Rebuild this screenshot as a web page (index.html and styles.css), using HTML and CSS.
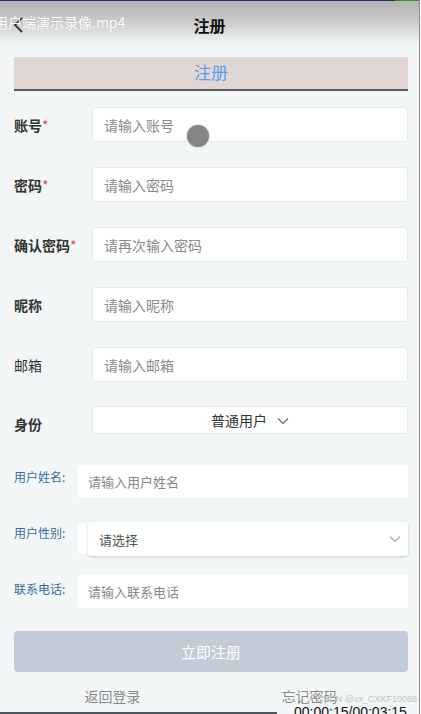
FILE: index.html
```html
<!DOCTYPE html>
<html lang="zh">
<head>
<meta charset="utf-8">
<link rel="stylesheet" href="styles.css">
</head>
<body>
<div class="page">
  <header class="topbar">
    <div class="topline"><span class="topline-green"></span></div>
    <span class="back"><svg width="12" height="18" viewBox="0 0 12 18"><path d="M10 2 L3 9 L10 16" fill="none" stroke="#333" stroke-width="1.8"/></svg></span>
    <span class="video-title">用户端演示录像.mp4</span>
    <h1 class="title">注册</h1>
  </header>

  <div class="content">
    <div class="tab">注册</div>

    <div class="row">
      <label class="label">账号<span class="req">*</span></label>
      <div class="input"><span class="ph">请输入账号</span></div>
    </div>
    <div class="row">
      <label class="label">密码<span class="req">*</span></label>
      <div class="input"><span class="ph">请输入密码</span></div>
    </div>
    <div class="row">
      <label class="label">确认密码<span class="req">*</span></label>
      <div class="input"><span class="ph">请再次输入密码</span></div>
    </div>
    <div class="row">
      <label class="label">昵称</label>
      <div class="input"><span class="ph">请输入昵称</span></div>
    </div>
    <div class="row">
      <label class="label light">邮箱</label>
      <div class="input"><span class="ph">请输入邮箱</span></div>
    </div>
    <div class="row row-role">
      <label class="label">身份</label>
      <div class="input role">普通用户
        <svg class="chev" width="12" height="8" viewBox="0 0 12 8"><path d="M1 1.5 L6 6.5 L11 1.5" fill="none" stroke="#666" stroke-width="1.2"/></svg>
      </div>
    </div>

    <div class="row2 r-name">
      <label class="label2">用户姓名:</label>
      <div class="input2"><span class="ph2">请输入用户姓名</span></div>
    </div>
    <div class="row2 r-sex">
      <label class="label2">用户性别:</label>
      <div class="sexwrap">
        <div class="select"><span class="sel-text">请选择</span>
          <svg width="12" height="8" viewBox="0 0 12 8"><path d="M1 1.5 L6 6.5 L11 1.5" fill="none" stroke="#aaa" stroke-width="1.1"/></svg>
        </div>
      </div>
    </div>
    <div class="row2 r-tel">
      <label class="label2">联系电话:</label>
      <div class="input2"><span class="ph2">请输入联系电话</span></div>
    </div>

    <button class="submit">立即注册</button>

    <div class="links">
      <span class="link">返回登录</span>
      <span class="link">忘记密码</span>
    </div>
  </div>

  <span class="cursor"></span>
  <span class="watermark">CSDN @vx_CXKF10088</span>
  <span class="timecode">00:00:15/00:03:15</span>
  <span class="progress"></span>
</div>
</body>
</html>
```

FILE: styles.css
```css
* { box-sizing: border-box; }
html, body { margin: 0; padding: 0; }
body {
  width: 421px;
  height: 714px;
  overflow: hidden;
  background: #ffffff;
  font-family: "Noto Sans CJK SC", "Noto Sans", sans-serif;
}
.page {
  position: relative;
  width: 420px;
  height: 714px;
  background: #f2f6f7;
  border-right: 1px solid #8c8c8c;
  overflow: hidden;
}
.topbar {
  position: relative;
  height: 46px;
  background: linear-gradient(to bottom, #b3b3b3 0%, #c9c9c9 45%, #eef1f1 90%, #f2f6f7 100%);
  display: flex;
  align-items: center;
  justify-content: center;
}
.topline {
  position: absolute;
  top: 0; left: 0; right: 0;
  height: 1px;
  background: #1f2e63;
}
.topline-green {
  position: absolute;
  right: 0; top: 0;
  width: 24px; height: 1px;
  background: #3a8f3a;
}
.back {
  position: absolute;
  left: 12px;
  top: 16px;
  display: flex;
}
.video-title {
  position: absolute;
  left: -6px;
  top: 12px;
  color: #ffffff;
  font-size: 14px;
  line-height: 20px;
  white-space: nowrap;
  text-shadow: 0 0 1px rgba(0,0,0,0.15);
}
.title {
  margin: 0;
  font-size: 16px;
  font-weight: 700;
  color: #111;
  line-height: 20px;
  padding-top: 4px;
}
.content {
  padding: 11px 11px 0 14px;
}
.tab {
  height: 34px;
  background: #e0d7d5;
  border-bottom: 2px solid #5a5a5a;
  color: #5c9cec;
  font-size: 17px;
  line-height: 30px;
  text-align: center;
}
.row {
  display: flex;
  align-items: center;
  height: 35px;
  margin-top: 25px;
}
.tab + .row { margin-top: 16px; }
.label {
  width: 78px;
  flex: none;
  font-size: 14px;
  font-weight: 700;
  color: #333;
  padding-top: 1px;
}
.label.light { font-weight: 400; color: #333; }
.req { color: #e05050; font-weight: 400; }
.input {
  flex: 1;
  height: 35px;
  background: #fff;
  border: 1px solid #e6eaec;
  border-radius: 4px;
  display: flex;
  align-items: center;
  padding-left: 11px;
}
.ph { font-size: 14px; color: #8a8a8a; }
.row-role { height: 28px; margin-top: 24px; }
.row-role .label { padding-top: 8px; }
.input.role {
  height: 28px;
  justify-content: center;
  padding-left: 0;
  font-size: 14px;
  color: #333;
  gap: 10px;
}
.chev { margin-top: 1px; }
.row2 {
  display: flex;
  align-items: center;
}
.label2 {
  width: 64px;
  flex: none;
  font-size: 12px;
  color: #3a6d98;
  align-self: flex-start;
  line-height: 16px;
}
.r-name { margin-top: 31px; height: 32px; }
.r-name .label2 { margin-top: 4px; }
.input2 {
  flex: 1;
  height: 33px;
  background: #fff;
  border-radius: 3px;
  display: flex;
  align-items: center;
  padding-left: 10px;
}
.ph2 { font-size: 13px; color: #888; }
.r-sex { margin-top: 24px; height: 34px; }
.r-sex .label2 { margin-top: 4px; }
.sexwrap {
  flex: 1;
  height: 31px;
  background: #fff;
  border-radius: 3px;
  padding-left: 10px;
  display: flex;
  align-items: flex-start;
  margin-top: 1px;
}
.select {
  flex: 1;
  height: 34px;
  margin-top: -1px;
  background: #fff;
  border-radius: 3px;
  box-shadow: 0 1px 3px rgba(0,0,0,0.18);
  display: flex;
  align-items: center;
  justify-content: space-between;
  padding: 0 7px 0 11px;
}
.sel-text { font-size: 13px; color: #555; }
.r-tel { margin-top: 20px; height: 33px; }
.r-tel .label2 { margin-top: 6px; }
.submit {
  display: block;
  width: 100%;
  height: 41px;
  margin-top: 23px;
  border: none;
  border-radius: 4px;
  background: #c3ccd6;
  color: #fff;
  font-family: inherit;
  font-size: 15px;
}
.links {
  display: flex;
  padding-top: 14px;
}
.link {
  flex: 1;
  text-align: center;
  font-size: 14px;
  color: #8a8a8a;
  line-height: 20px;
}
.cursor {
  position: absolute;
  left: 187px;
  top: 125px;
  width: 22px;
  height: 22px;
  border-radius: 50%;
  background: #858585;
  box-shadow: 0 0 2px rgba(0,0,0,0.3);
}
.watermark {
  position: absolute;
  right: 2px;
  top: 694px;
  font-family: "Liberation Sans", sans-serif;
  font-size: 9px;
  color: #c4c4c4;
  white-space: nowrap;
}
.timecode {
  position: absolute;
  left: 294px;
  top: 704px;
  font-family: "Liberation Sans", sans-serif;
  font-size: 14px;
  color: #111;
  white-space: nowrap;
}
.progress {
  position: absolute;
  left: 0;
  bottom: 0;
  width: 277px;
  height: 2px;
  background: #4b5761;
}
```
